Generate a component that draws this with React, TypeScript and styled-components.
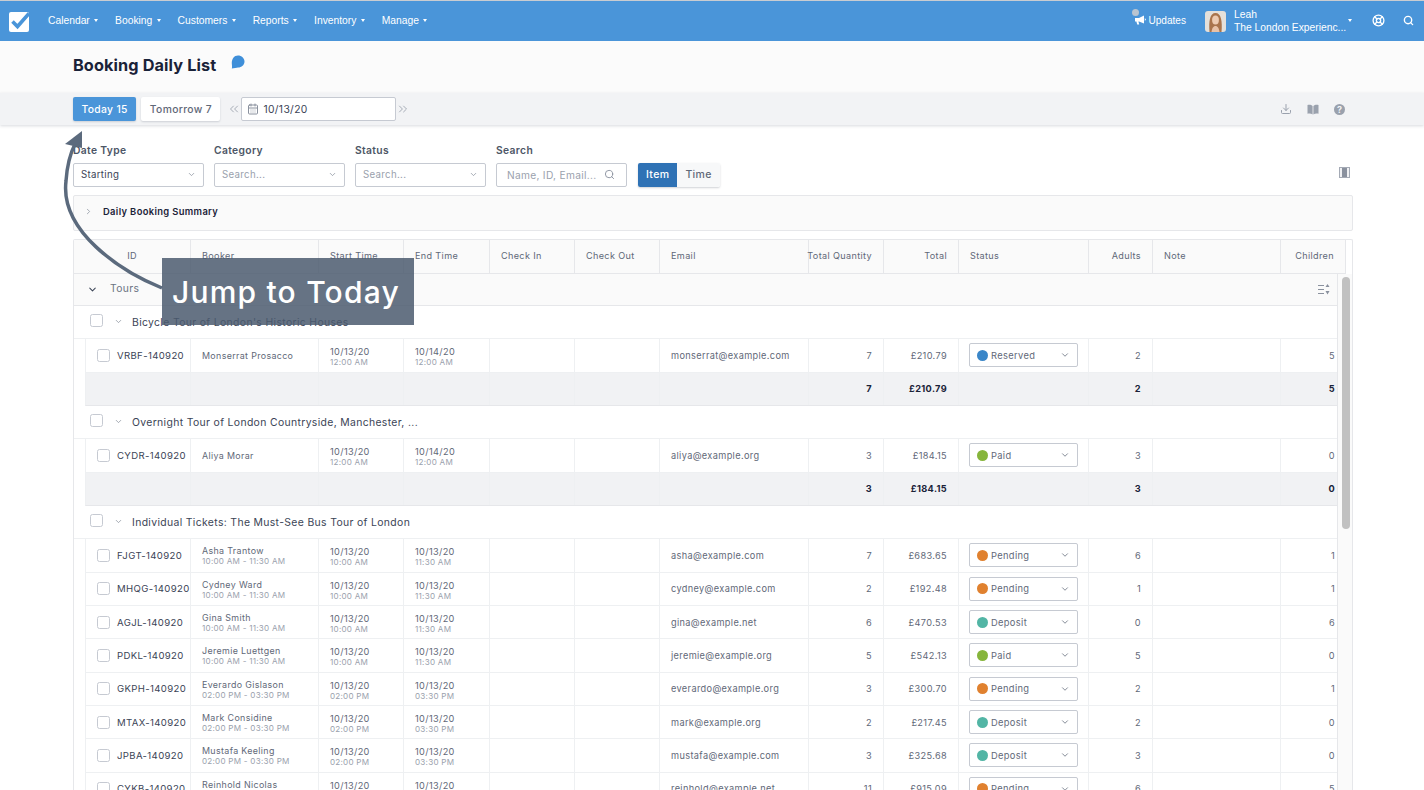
import * as React from "react"
import styled, { createGlobalStyle } from "styled-components"
import { ChevronDown, ChevronRight, ChevronsLeft, ChevronsRight, Search, LifeBuoy, Download, CalendarDays } from "lucide-react"

const GlobalStyle = createGlobalStyle`
  html, body { margin: 0; padding: 0; background: #fff; }
  * { box-sizing: border-box; }
  body { font-family: Inter, "Liberation Sans", sans-serif; color: #1a2238; overflow: hidden; }
`

// shared middle columns, only the first and last differ between header and body
const MID_COLS = "128px 85px 86px 85px 85px 149px 75px 75px 130px 64px 128px"

const Page = styled.div`
  position: relative;
  width: 1424px;
  height: 790px;
  overflow: hidden;
  border-top: 1px solid #c9ccd1;
`

const Nav = styled.div`
  display: flex;
  align-items: center;
  height: 40px;
  padding: 0 0 2px 9px;
  background: #4a95d9;
  color: #fff;
  font-family: "Liberation Sans", Arial, sans-serif;
  font-size: 10.3px;
`

const Logo = styled.svg`
  width: 21px;
  height: 21px;
  margin-top: 2px;
`

const NavMenu = styled.div`
  display: flex;
  gap: 16.8px;
  margin-left: 18px;
`

const NavItem = styled.span`
  display: flex;
  align-items: center;
  gap: 4.5px;
  white-space: nowrap;
`

const Caret = styled.i`
  display: inline-block;
  width: 0;
  height: 0;
  border-left: 2.5px solid transparent;
  border-right: 2.5px solid transparent;
  border-top: 3px solid #fff;
`

const NavRight = styled.div`
  display: flex;
  align-items: center;
  margin-left: auto;
  padding-right: 10px;
`

const Updates = styled.div`
  position: relative;
  display: flex;
  align-items: center;
  gap: 2px;
  margin-right: 19px;
  font-size: 10.1px;
`

const UpdatesDot = styled.i`
  position: absolute;
  left: -3px;
  top: -6px;
  width: 7px;
  height: 7px;
  border-radius: 50%;
  background: #b9c4d0;
`

const Avatar = styled.svg`
  width: 21px;
  height: 21px;
  border-radius: 3px;
  margin: 2px 8px 0 0;
`

const UserBlock = styled.div`
  display: flex;
  flex-direction: column;
  gap: 1px;
  margin-top: 2px;
  line-height: 12px;
  width: 114px;
  white-space: nowrap;
`

const NavIcons = styled.div`
  display: flex;
  align-items: center;
  gap: 18px;
  margin-left: 20px;
`

const TitleBand = styled.div`
  display: flex;
  align-items: flex-start;
  height: 52px;
  padding: 14px 0 0 73px;
  background: #fbfbfb;
`

const Title = styled.h1`
  margin: 0;
  font-size: 16.3px;
  line-height: 20px;
  font-weight: 700;
  letter-spacing: 0.1px;
  color: #1a2238;
`

const Bubble = styled.svg`
  width: 14px;
  height: 15px;
  margin-left: 15px;
`

const Toolbar = styled.div`
  position: relative;
  display: flex;
  align-items: center;
  height: 32px;
  padding: 0 79px 0 73px;
  background: #f2f3f5;
  box-shadow: 0 1px 3px rgba(40, 50, 70, 0.18);
`

const DayButton = styled.button<{ $active?: boolean }>`
  height: 24px;
  padding: 0 8.5px;
  margin-right: 5px;
  border: 0;
  border-radius: 2px;
  font: 500 10.3px Inter, sans-serif;
  letter-spacing: 0.35px;
  color: ${({ $active }) => ($active ? "#fff" : "#5f6878")};
  background: ${({ $active }) => ($active ? "#4a95d9" : "#fff")};
  box-shadow: 0 1px 2px rgba(40, 50, 70, 0.18);
`

const Pager = styled.span`
  display: flex;
  align-items: center;
  margin-left: 2px;
  color: #9aa1ad;
`

const DateInput = styled.div`
  display: flex;
  align-items: center;
  gap: 4px;
  width: 155px;
  height: 24px;
  margin-right: -2px;
  padding-left: 5px;
  background: #fff;
  border: 1px solid #c6cad2;
  border-radius: 2px;
  font-size: 10.3px;
  letter-spacing: 0.35px;
  color: #3b4456;
`

const ToolIcons = styled.div`
  display: flex;
  align-items: center;
  gap: 15px;
  margin-left: auto;
  color: #9aa1ad;
`

const BookIcon = styled.svg`
  width: 12px;
  height: 11px;
`

const HelpDot = styled.span`
  width: 11px;
  height: 11px;
  border-radius: 50%;
  background: #9aa1ad;
  color: #f2f3f5;
  font-size: 9px;
  font-weight: 700;
  line-height: 11px;
  text-align: center;
`

const Content = styled.div`
  padding: 17px 71px 0 73px;
`

const Filters = styled.div`
  display: flex;
  align-items: flex-end;
  height: 45px;
`

const Field = styled.div<{ $w: number }>`
  width: ${({ $w }) => $w}px;
  margin-right: 10px;
`

const FieldLabel = styled.div`
  font-size: 10.3px;
  font-weight: 600;
  letter-spacing: 0.35px;
  line-height: 12px;
  margin-bottom: 7.5px;
  color: #4d5666;
`

const SelectBox = styled.div<{ $placeholder?: boolean }>`
  display: flex;
  align-items: center;
  justify-content: space-between;
  height: 24px;
  padding: 0 7px 1px;
  background: #fff;
  border: 1px solid #c6cad2;
  border-radius: 2px;
  font-size: 9.7px;
  letter-spacing: 0.3px;
  color: ${({ $placeholder }) => ($placeholder ? "#9aa1ad" : "#3b4456")};
`

const SearchBox = styled(SelectBox)`
  padding: 0 11px 1px 10px;
  font-size: 10.2px;
`

const Toggle = styled.div`
  display: flex;
  height: 24px;
  margin-left: 1px;
  border-radius: 2px;
  overflow: hidden;
  box-shadow: 0 1px 2px rgba(40, 50, 70, 0.22);
`

const ToggleItem = styled.span<{ $active?: boolean }>`
  display: flex;
  align-items: center;
  padding: 0 8px 1px;
  font-size: 10.5px;
  font-weight: 500;
  letter-spacing: 0.35px;
  color: ${({ $active }) => ($active ? "#fff" : "#5f6878")};
  background: ${({ $active }) => ($active ? "#2f72b5" : "#f7f8f9")};
`

const ColumnsIcon = styled.svg`
  width: 11px;
  height: 11px;
  margin-left: auto;
  margin-right: 3px;
  margin-bottom: 9px;
`

const Summary = styled.div`
  display: flex;
  align-items: center;
  gap: 10px;
  height: 36px;
  margin-top: 8px;
  padding: 0 0 3px 10px;
  background: #fafafa;
  border: 1px solid #e6e7ea;
  border-radius: 2px;
  font-size: 9.4px;
  font-weight: 600;
  letter-spacing: 0.35px;
  color: #1a2238;
`

const Table = styled.div`
  margin-top: 8px;
  height: 560px;
  border: 1px solid #e6e7ea;
  border-bottom: 0;
  border-radius: 2px 2px 0 0;
  overflow: hidden;
`

const HeaderRow = styled.div`
  display: grid;
  grid-template-columns: 117px ${MID_COLS} 65px;
  height: 34px;
  width: 1272px;
  background: #fafafa;
  border-bottom: 1px solid #e6e7ea;
`

const HeaderCell = styled.div<{ $align?: string; $pad?: number }>`
  display: flex;
  align-items: center;
  justify-content: ${({ $align }) => $align || "flex-start"};
  padding: 0 ${({ $pad }) => $pad ?? 11}px 2px;
  border-right: 1px solid #e6e7ea;
  font-size: 9.1px;
  letter-spacing: 0.35px;
  color: #5f6878;
  white-space: nowrap;
`

const BodyWrap = styled.div`
  display: flex;
`

const Rows = styled.div`
  width: 1264px;
  flex: none;
  border-right: 1px solid #e6e7ea;
`

const ScrollTrack = styled.div`
  flex: 1;
  padding: 3px 3px 0 4px;
  background: #fafafa;
`

const ScrollThumb = styled.div`
  width: 8px;
  height: 252px;
  border-radius: 4px;
  background: #c1c1c1;
`

const TourRow = styled.div`
  display: flex;
  align-items: center;
  height: 32px;
  padding: 0 7px 0 13px;
  background: #fafafa;
  border-bottom: 1px solid #e6e7ea;
  font-size: 10.3px;
  letter-spacing: 0.35px;
  color: #6b7382;
`

const TourLabel = styled.span`
  margin: 0 0 4px 12px;
`

const SortIcon = styled.svg`
  width: 12px;
  height: 11px;
  margin-left: auto;
`

const GroupRow = styled.div`
  display: flex;
  align-items: center;
  height: 33.33px;
  padding-left: 16px;
  background: #fff;
  border-bottom: 1px solid #eef0f2;
  font-size: 10.4px;
  letter-spacing: 0.35px;
  color: #3b4456;
`

const CheckBox = styled.span`
  flex: none;
  width: 13px;
  height: 13px;
  background: #fff;
  border: 1px solid #c6cad2;
  border-radius: 2.5px;
`

const GroupCheck = styled(CheckBox)`
  margin-top: -3px;
`

const GroupChevron = styled.span`
  display: flex;
  margin: -2px 9px 0 11px;
  color: #8a919e;
`

const DataRow = styled.div<{ $total?: boolean }>`
  display: grid;
  grid-template-columns: 105px ${MID_COLS} 57px;
  height: 33.33px;
  margin-left: 11px;
  background: ${({ $total }) => ($total ? "#f1f2f4" : "#fff")};
  border-left: 1px solid #eef0f2;
  border-bottom: 1px solid ${({ $total }) => ($total ? "#e6e7ea" : "#eef0f2")};
`

const Cell = styled.div<{ $right?: boolean; $bold?: boolean; $last?: boolean }>`
  display: flex;
  flex-direction: column;
  justify-content: center;
  align-items: ${({ $right }) => ($right ? "flex-end" : "flex-start")};
  min-width: 0;
  padding: 0 ${({ $last }) => ($last ? 3 : 11)}px 0 11px;
  border-right: ${({ $last }) => ($last ? "0" : "1px solid #eef0f2")};
  font-size: 9.2px;
  font-weight: ${({ $bold }) => ($bold ? 700 : 400)};
  letter-spacing: 0.35px;
  line-height: 11px;
  color: ${({ $bold }) => ($bold ? "#1a2238" : "#5f6878")};
  white-space: nowrap;
`

const BookerCell = styled(Cell)<{ $slot?: boolean }>`
  padding-top: ${({ $slot }) => ($slot ? 2 : 0)}px;
  font-size: 8.9px;
`

const DateCell = styled(Cell)`
  padding-top: 4px;
`

const IdCell = styled.div`
  display: flex;
  align-items: center;
  gap: 7px;
  padding-left: 11px;
  border-right: 1px solid #eef0f2;
  font-size: 9.6px;
  letter-spacing: 0.35px;
  color: #3b4456;
  white-space: nowrap;
`

const Sub = styled.span`
  font-size: 8.1px;
  line-height: 11px;
  letter-spacing: 0.25px;
  color: #9aa1ad;
`

const StatusSelect = styled.div`
  display: flex;
  align-items: center;
  width: 109px;
  height: 24px;
  margin-left: -1px;
  padding: 0 7px;
  background: #fff;
  border: 1px solid #c6cad2;
  border-radius: 2px;
  color: #5f6878;
  font-size: 9.3px;
`

const StatusDot = styled.i<{ $color: string }>`
  width: 11px;
  height: 11px;
  margin-right: 3px;
  border-radius: 50%;
  background: ${({ $color }) => $color};
`

const StatusChevron = styled.span`
  display: flex;
  margin-left: auto;
  color: #6c7482;
`

const Callout = styled.div`
  position: absolute;
  left: 162px;
  top: 257px;
  width: 252px;
  height: 67px;
  padding-left: 10px;
  background: rgba(75, 90, 111, 0.85);
  color: #fff;
  font-size: 30px;
  font-family: Inter, "Open Sans", sans-serif;
  font-weight: 500;
  letter-spacing: 1.2px;
  line-height: 69px;
  white-space: nowrap;
`

const ArrowOverlay = styled.svg`
  position: absolute;
  left: 50px;
  top: 115px;
  width: 130px;
  height: 190px;
  pointer-events: none;
`

const STATUS: Record<string, string> = {
  Reserved: "#3a86c8",
  Paid: "#86b53c",
  Pending: "#e0812f",
  Deposit: "#52b5a5",
}

interface Booking {
  id: string
  name: string
  slot?: string
  date1: string
  date2: string
  time1: string
  time2: string
  email: string
  qty: number
  total: string
  status: string
  adults: number
  children: number
}

const morning = { slot: "10:00 AM - 11:30 AM", date1: "10/13/20", date2: "10/13/20", time1: "10:00 AM", time2: "11:30 AM" }
const afternoon = { slot: "02:00 PM - 03:30 PM", date1: "10/13/20", date2: "10/13/20", time1: "02:00 PM", time2: "03:30 PM" }
const overnight = { date1: "10/13/20", date2: "10/14/20", time1: "12:00 AM", time2: "12:00 AM" }

const GROUPS: { title: string; rows: Booking[]; totals?: { qty: number; total: string; adults: number; children: number } }[] = [
  {
    title: "Bicycle Tour of London's Historic Houses",
    rows: [{ id: "VRBF-140920", name: "Monserrat Prosacco", ...overnight, email: "monserrat@example.com", qty: 7, total: "£210.79", status: "Reserved", adults: 2, children: 5 }],
    totals: { qty: 7, total: "£210.79", adults: 2, children: 5 },
  },
  {
    title: "Overnight Tour of London Countryside, Manchester, ...",
    rows: [{ id: "CYDR-140920", name: "Aliya Morar", ...overnight, email: "aliya@example.org", qty: 3, total: "£184.15", status: "Paid", adults: 3, children: 0 }],
    totals: { qty: 3, total: "£184.15", adults: 3, children: 0 },
  },
  {
    title: "Individual Tickets: The Must-See Bus Tour of London",
    rows: [
      { id: "FJGT-140920", name: "Asha Trantow", ...morning, email: "asha@example.com", qty: 7, total: "£683.65", status: "Pending", adults: 6, children: 1 },
      { id: "MHQG-140920", name: "Cydney Ward", ...morning, email: "cydney@example.com", qty: 2, total: "£192.48", status: "Pending", adults: 1, children: 1 },
      { id: "AGJL-140920", name: "Gina Smith", ...morning, email: "gina@example.net", qty: 6, total: "£470.53", status: "Deposit", adults: 0, children: 6 },
      { id: "PDKL-140920", name: "Jeremie Luettgen", ...morning, email: "jeremie@example.org", qty: 5, total: "£542.13", status: "Paid", adults: 5, children: 0 },
      { id: "GKPH-140920", name: "Everardo Gislason", ...afternoon, email: "everardo@example.org", qty: 3, total: "£300.70", status: "Pending", adults: 2, children: 1 },
      { id: "MTAX-140920", name: "Mark Considine", ...afternoon, email: "mark@example.org", qty: 2, total: "£217.45", status: "Deposit", adults: 2, children: 0 },
      { id: "JPBA-140920", name: "Mustafa Keeling", ...afternoon, email: "mustafa@example.com", qty: 3, total: "£325.68", status: "Deposit", adults: 3, children: 0 },
      { id: "CYKB-140920", name: "Reinhold Nicolas", ...afternoon, email: "reinhold@example.net", qty: 11, total: "£915.09", status: "Pending", adults: 6, children: 5 },
    ],
  },
]

const HEADERS: { label: string; align?: string; pad?: number }[] = [
  { label: "ID", align: "center", pad: 0 },
  { label: "Booker" },
  { label: "Start Time" },
  { label: "End Time" },
  { label: "Check In" },
  { label: "Check Out" },
  { label: "Email" },
  { label: "Total Quantity", align: "flex-end" },
  { label: "Total", align: "flex-end" },
  { label: "Status" },
  { label: "Adults", align: "flex-end" },
  { label: "Note" },
  { label: "Children", align: "flex-end" },
]

const NAV = ["Calendar", "Booking", "Customers", "Reports", "Inventory", "Manage"]

const BookingRow = ({ row }: { row: Booking }) => (
  <DataRow>
    <IdCell>
      <CheckBox />
      {row.id}
    </IdCell>
    <BookerCell $slot={!!row.slot}>
      {row.name}
      {row.slot && <Sub>{row.slot}</Sub>}
    </BookerCell>
    <DateCell>
      {row.date1}
      <Sub>{row.time1}</Sub>
    </DateCell>
    <DateCell>
      {row.date2}
      <Sub>{row.time2}</Sub>
    </DateCell>
    <Cell />
    <Cell />
    <Cell>{row.email}</Cell>
    <Cell $right>{row.qty}</Cell>
    <Cell $right>{row.total}</Cell>
    <Cell>
      <StatusSelect>
        <StatusDot $color={STATUS[row.status]} />
        {row.status}
        <StatusChevron>
          <ChevronDown size={10} />
        </StatusChevron>
      </StatusSelect>
    </Cell>
    <Cell $right>{row.adults}</Cell>
    <Cell />
    <Cell $right $last>{row.children}</Cell>
  </DataRow>
)

export default function App() {
  return (
    <Page>
      <GlobalStyle />
      <Nav>
        <Logo viewBox="0 0 21 21">
          <rect x="0" y="1" width="20" height="20" rx="2" fill="#fff" />
          <path d="M3.5 10.5 L8.5 15.5 L20 2.5" fill="none" stroke="#4a95d9" strokeWidth="3.6" />
        </Logo>
        <NavMenu>
          {NAV.map((item) => (
            <NavItem key={item}>
              {item}
              <Caret />
            </NavItem>
          ))}
        </NavMenu>
        <NavRight>
          <Updates>
            <UpdatesDot />
            <svg width="11" height="10" viewBox="0 0 11 10">
              <path d="M0 3 H4 L9 0.5 V8.5 L4 6.5 H3.4 L4.2 9.6 H2.2 L1.4 6.5 H0 Z" fill="#fff" />
              <path d="M9.8 3 L11 4.5 L9.8 6 Z" fill="#fff" />
            </svg>
            Updates
          </Updates>
          <Avatar viewBox="0 0 21 21">
            <rect width="21" height="21" fill="#e4e0da" />
            <path d="M4.5 21 C3.5 10 5 2 10.5 2 C16 2 17.5 10 16.5 21 Z" fill="#a9744c" />
            <ellipse cx="10.5" cy="9" rx="3.4" ry="4.6" fill="#edcbb2" />
            <path d="M6.5 21 C7 16.5 9 15 10.5 15 C12 15 14 16.5 14.5 21 Z" fill="#e8c2a8" />
          </Avatar>
          <UserBlock>
            <span>Leah</span>
            <span>The London Experienc...</span>
          </UserBlock>
          <Caret />
          <NavIcons>
            <LifeBuoy size={13} strokeWidth={2.4} />
            <Search size={11} strokeWidth={3} />
          </NavIcons>
        </NavRight>
      </Nav>

      <TitleBand>
        <Title>Booking Daily List</Title>
        <Bubble viewBox="0 0 14 15">
          <path d="M7 0.5 C10.6 0.5 13.5 3.2 13.5 6.6 C13.5 10 10.6 12.6 7 12.6 C5.6 12.6 3 13.6 0.8 13.6 C1.2 12.6 1 10.6 0.8 8.6 C0.6 4 3.2 0.5 7 0.5 Z" fill="#3f8fd9" />
        </Bubble>
      </TitleBand>

      <Toolbar>
        <DayButton $active>Today 15</DayButton>
        <DayButton>Tomorrow 7</DayButton>
        <Pager>
          <ChevronsLeft size={14} strokeWidth={1.5} />
        </Pager>
        <DateInput>
          <CalendarDays size={12} color="#8a919e" />
          10/13/20
        </DateInput>
        <Pager>
          <ChevronsRight size={14} strokeWidth={1.5} />
        </Pager>
        <ToolIcons>
          <Download size={12} />
          <BookIcon viewBox="0 0 12 11">
            <path d="M0.5 1 C2.5 0.6 4.4 0.8 5.6 2 V10.6 C4.4 9.6 2.5 9.4 0.5 9.8 Z M11.5 1 C9.5 0.6 7.6 0.8 6.4 2 V10.6 C7.6 9.6 9.5 9.4 11.5 9.8 Z" fill="#9aa1ad" />
          </BookIcon>
          <HelpDot>?</HelpDot>
        </ToolIcons>
      </Toolbar>

      <Content>
        <Filters>
          <Field $w={131}>
            <FieldLabel>Date Type</FieldLabel>
            <SelectBox>
              Starting
              <ChevronDown size={9} color="#8a919e" />
            </SelectBox>
          </Field>
          <Field $w={131}>
            <FieldLabel>Category</FieldLabel>
            <SelectBox $placeholder>
              Search...
              <ChevronDown size={9} color="#8a919e" />
            </SelectBox>
          </Field>
          <Field $w={131}>
            <FieldLabel>Status</FieldLabel>
            <SelectBox $placeholder>
              Search...
              <ChevronDown size={9} color="#8a919e" />
            </SelectBox>
          </Field>
          <Field $w={131}>
            <FieldLabel>Search</FieldLabel>
            <SearchBox $placeholder>
              Name, ID, Email...
              <Search size={11} color="#8a919e" />
            </SearchBox>
          </Field>
          <Toggle>
            <ToggleItem $active>Item</ToggleItem>
            <ToggleItem>Time</ToggleItem>
          </Toggle>
          <ColumnsIcon viewBox="0 0 11 11">
            <rect x="0.5" y="0.5" width="10" height="10" fill="#f0f1f3" stroke="#a4aab5" />
            <rect x="3" y="1" width="5" height="9" fill="#8a919e" />
          </ColumnsIcon>
        </Filters>

        <Summary>
          <ChevronRight size={9} color="#8a919e" />
          Daily Booking Summary
        </Summary>

        <Table>
          <HeaderRow>
            {HEADERS.map((h) => (
              <HeaderCell key={h.label} $align={h.align} $pad={h.pad}>
                {h.label}
              </HeaderCell>
            ))}
          </HeaderRow>
          <BodyWrap>
            <Rows>
              <TourRow>
                <ChevronDown size={11} color="#3b4456" strokeWidth={2.2} />
                <TourLabel>Tours</TourLabel>
                <SortIcon viewBox="0 0 12 11">
                  <path d="M0 1.5 H6 M0 5.5 H6 M0 9.5 H6" stroke="#8a919e" />
                  <path d="M9.5 0 L11.5 3 H7.5 Z M9.5 10.5 L11.5 7 H7.5 Z" fill="#8a919e" />
                </SortIcon>
              </TourRow>
              {GROUPS.map((group) => (
                <React.Fragment key={group.title}>
                  <GroupRow>
                    <GroupCheck />
                    <GroupChevron>
                      <ChevronDown size={9} />
                    </GroupChevron>
                    {group.title}
                  </GroupRow>
                  {group.rows.map((row) => (
                    <BookingRow key={row.id} row={row} />
                  ))}
                  {group.totals && (
                    <DataRow $total>
                      <Cell />
                      <Cell />
                      <Cell />
                      <Cell />
                      <Cell />
                      <Cell />
                      <Cell />
                      <Cell $right $bold>{group.totals.qty}</Cell>
                      <Cell $right $bold>{group.totals.total}</Cell>
                      <Cell />
                      <Cell $right $bold>{group.totals.adults}</Cell>
                      <Cell />
                      <Cell $right $bold $last>{group.totals.children}</Cell>
                    </DataRow>
                  )}
                </React.Fragment>
              ))}
            </Rows>
            <ScrollTrack>
              <ScrollThumb />
            </ScrollTrack>
          </BodyWrap>
        </Table>
      </Content>

      <ArrowOverlay viewBox="0 0 130 190">
        <path d="M112 172 C70 155 10 115 16 65 C17 50 20 38 25 28" fill="none" stroke="#5b6a7d" strokeWidth="3.5" />
        <path d="M32 15 L15 28 L32 32 Z" fill="#5b6a7d" />
      </ArrowOverlay>
      <Callout>Jump to Today</Callout>
    </Page>
  )
}
